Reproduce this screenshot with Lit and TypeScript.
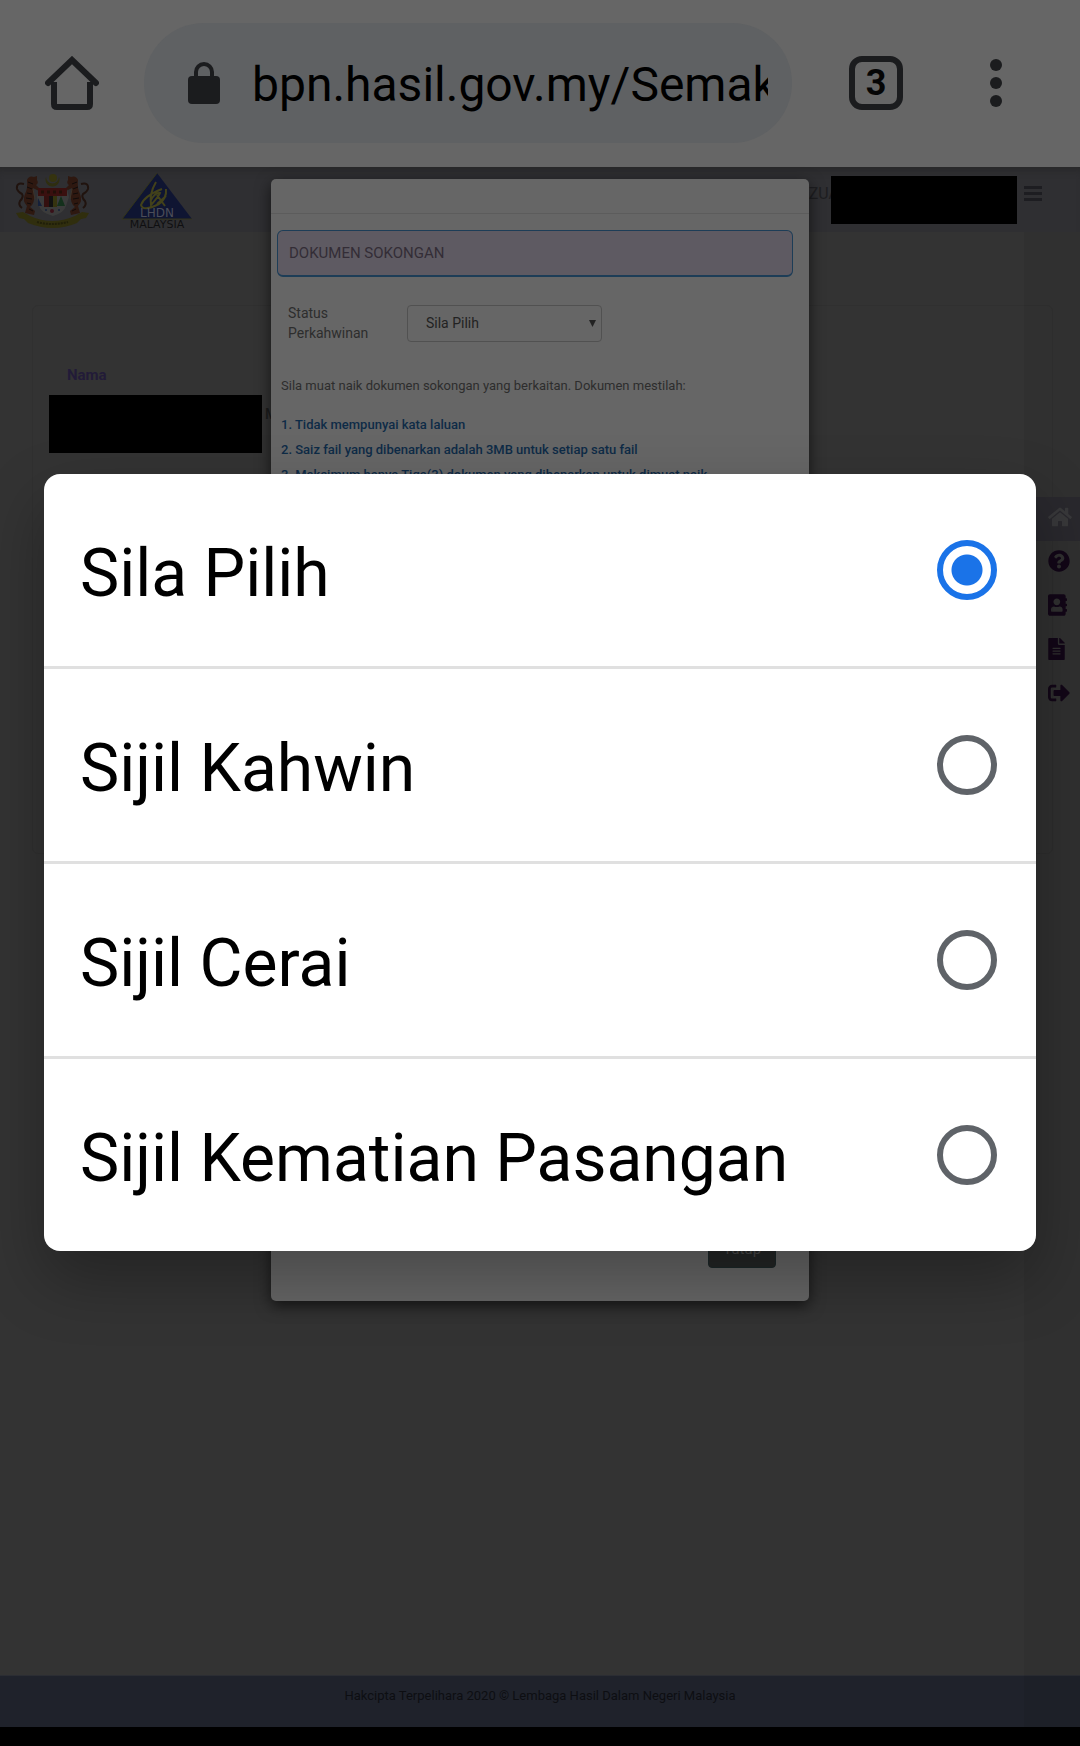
import { LitElement, html, css, svg } from "lit";
import { customElement, state } from "lit/decorators.js";

const SIDE_ICONS = [
  {
    name: "Utama",
    box: "0 0 576 512",
    width: 24,
    path: "M280.37 148.26L96 300.11V464a16 16 0 0 0 16 16l112.06-.29a16 16 0 0 0 15.92-16V368a16 16 0 0 1 16-16h64a16 16 0 0 1 16 16v95.64a16 16 0 0 0 16 16.05L464 480a16 16 0 0 0 16-16V300L295.67 148.26a12.19 12.19 0 0 0-15.3 0zM571.6 251.47L488 182.56V44.05a12 12 0 0 0-12-12h-56a12 12 0 0 0-12 12v72.61L318.47 43a48 48 0 0 0-61 0L4.34 251.47a12 12 0 0 0-1.6 16.9l25.5 31A12 12 0 0 0 45.15 301l235.22-193.74a12.19 12.19 0 0 1 15.3 0L530.9 301a12 12 0 0 0 16.9-1.6l25.5-31a12 12 0 0 0-1.7-16.93z",
  },
  {
    name: "Bantuan",
    box: "0 0 512 512",
    width: 22,
    path: "M504 256c0 136.997-111.043 248-248 248S8 392.997 8 256C8 119.083 119.043 8 256 8s248 111.083 248 248zM262.655 90c-54.497 0-89.255 22.957-116.549 63.758-3.536 5.286-2.353 12.415 2.715 16.258l34.699 26.31c5.205 3.947 12.621 3.008 16.665-2.122 17.864-22.658 30.113-35.797 57.303-35.797 20.429 0 45.698 13.148 45.698 32.958 0 14.976-12.363 22.667-32.534 33.976C247.128 238.528 216 254.941 216 296v4c0 6.627 5.373 12 12 12h56c6.627 0 12-5.373 12-12v-1.333c0-28.462 83.186-29.647 83.186-106.667 0-58.002-60.165-102-116.531-102zM256 338c-25.365 0-46 20.635-46 46 0 25.364 20.635 46 46 46s46-20.636 46-46c0-25.365-20.635-46-46-46z",
  },
  {
    name: "Hubungi",
    box: "0 0 448 512",
    width: 19,
    path: "M436 160c6.6 0 12-5.4 12-12v-40c0-6.6-5.4-12-12-12h-20V48c0-26.5-21.5-48-48-48H48C21.5 0 0 21.5 0 48v416c0 26.5 21.5 48 48 48h320c26.5 0 48-21.5 48-48v-48h20c6.6 0 12-5.4 12-12v-40c0-6.6-5.4-12-12-12h-20v-64h20c6.6 0 12-5.4 12-12v-40c0-6.6-5.4-12-12-12h-20v-64h20zm-228-60c46 0 80 35 80 80s-34 80-80 80-80-35-80-80 34-80 80-80zm136 292c0 13-10 24-24 24H96c-14 0-24-11-24-24v-32c0-38 30-66 68-66h5c17 8 38 12 63 12s46-4 63-12h5c38 0 68 28 68 66v32z",
  },
  {
    name: "Dokumen",
    box: "0 0 384 512",
    width: 17,
    path: "M224 136V0H24C10.7 0 0 10.7 0 24v464c0 13.3 10.7 24 24 24h336c13.3 0 24-10.7 24-24V160H248c-13.2 0-24-10.8-24-24zm64 236c0 6.6-5.4 12-12 12H108c-6.6 0-12-5.4-12-12v-8c0-6.6 5.4-12 12-12h168c6.6 0 12 5.4 12 12v8zm0-64c0 6.6-5.4 12-12 12H108c-6.6 0-12-5.4-12-12v-8c0-6.6 5.4-12 12-12h168c6.6 0 12 5.4 12 12v8zm0-72v8c0 6.6-5.4 12-12 12H108c-6.6 0-12-5.4-12-12v-8c0-6.6 5.4-12 12-12h168c6.6 0 12 5.4 12 12zm96-114.1v6.1H256V0h6.1c6.4 0 12.5 2.5 17 7l97.9 98c4.5 4.5 7 10.6 7 16.9z",
  },
  {
    name: "Keluar",
    box: "0 0 512 512",
    width: 22,
    path: "M497 273L329 441c-15 15-41 4.5-41-17v-96H152c-13.3 0-24-10.7-24-24v-96c0-13.3 10.7-24 24-24h136V88c0-21.4 25.9-32 41-17l168 168c9.3 9.4 9.3 24.6 0 34zM192 436v-40c0-6.6-5.4-12-12-12H96c-17.7 0-32-14.3-32-32V160c0-17.7 14.3-32 32-32h84c6.6 0 12-5.4 12-12V76c0-6.6-5.4-12-12-12H96c-53 0-96 43-96 96v192c0 53 43 96 96 96h84c6.6 0 12-5.4 12-12z",
  },
];

const STATUSES = ["Sila Pilih", "Sijil Kahwin", "Sijil Cerai", "Sijil Kematian Pasangan"];

// One supporting tiger of the coat of arms, drawn for the left side.
const tiger = svg`
  <path d="M9 12Q1 10 2 17Q3 20 7 22Q9 25 5 29Q3 33 7 36" fill="none" stroke="#20130e" stroke-width="2"/>
  <path d="M12 8Q14 3 19 5L22 4L22 8Q24 11 21 13L25 17L24 19L18 16L19 24Q20 31 15 35L20 39L19 43L10 41L12 34Q7 29 10 22Q13 16 12 8Z" fill="#2e1810"/>
  <path d="M13 10l5 2M12 15l5 2M12 21l5 1M11 26l6 1M12 31l4 1M14 37l4 2" stroke="#100b0a" stroke-width="1"/>
  <path d="M18 17l2 10" stroke="#3d3328" stroke-width="1"/>`;

@customElement("app-root")
export class AppRoot extends LitElement {
  @state() private chosen = 0;

  static styles = css`
    :host {
      display: flex;
      flex-direction: column;
      position: relative;
      min-height: 100vh;
      background: #333;
      font-family: Roboto, "Liberation Sans", sans-serif;
      font-size: 14px;
      line-height: 20px;
      overflow: hidden;
    }
    * {
      box-sizing: border-box;
    }
    button,
    input,
    select {
      font: inherit;
      color: inherit;
      margin: 0;
      padding: 0;
      border: 0;
      background: none;
      appearance: none;
      outline: none;
    }
    svg {
      display: block;
      flex: none;
    }

    .browser {
      display: flex;
      align-items: center;
      height: 167px;
      padding: 0 66px 2px 45px;
      background: #666;
      color: #1b1c1e;
    }
    .address {
      display: flex;
      align-items: center;
      flex: 1;
      min-width: 0;
      height: 120px;
      margin: 0 57px 0 45px;
      padding: 0 24px 0 44px;
      gap: 32px;
      border-radius: 60px;
      background: #5f6163;
    }
    .url {
      flex: 1;
      min-width: 0;
      height: 60px;
      padding-top: 4px;
      font-size: 48px;
      color: #000;
    }
    .tabs {
      width: 54px;
      height: 54px;
      border: 6px solid #1b1c1e;
      border-radius: 13px;
      font-size: 36px;
      line-height: 42px;
      font-weight: 700;
      color: #050505;
      text-align: center;
    }
    .more {
      margin-left: 75px;
      padding: 0 12px;
    }

    .page {
      display: flex;
      flex-direction: column;
      flex: 1;
      position: relative;
      border-bottom: 19px solid #000;
    }
    .site {
      display: flex;
      align-items: flex-start;
      height: 65px;
      padding: 5px 38px 0 15px;
      background: #2f2f32;
      box-shadow: inset 0 8px 8px -6px #262627;
    }
    .lhdn {
      margin-left: 30px;
    }
    .user {
      margin-left: auto;
      padding-top: 12px;
      font-size: 16px;
      color: #1e1e21;
    }
    .redacted {
      background: #000;
    }
    .user-box {
      width: 186px;
      height: 48px;
      margin: 4px 7px 0 -8px;
      z-index: 1;
    }
    .menu {
      margin-top: 14px;
    }
    .card {
      margin: 73px 27px auto 32px;
      padding: 59px 16px 400px;
      border: 1px solid #303030;
      border-radius: 6px;
    }
    .name {
      margin: 0 0 10px 18px;
      font-size: 15px;
      font-weight: 700;
      color: #221b38;
    }
    .record {
      display: flex;
      gap: 3px;
      color: #1c1c1c;
      font-weight: 500;
    }
    .record .redacted {
      width: 213px;
      height: 58px;
    }
    .record span {
      padding-top: 9px;
    }
    .foot {
      height: 52px;
      padding-top: 10px;
      border-top: 1px solid #2b2d33;
      background: #1f222b;
      font-size: 13px;
      text-align: center;
      color: #0d0e12;
    }
    .rail {
      position: absolute;
      top: 65px;
      right: 0;
      bottom: 0;
      width: 56px;
      padding-top: 265px;
      background: rgba(0, 0, 0, 0.05);
    }
    .rail a {
      display: flex;
      align-items: center;
      height: 44px;
      padding: 0 0 4px 24px;
      color: #120617;
    }
    .rail a:first-child {
      background: #29282d;
      color: #38383a;
    }

    .modal {
      display: flex;
      flex-direction: column;
      position: absolute;
      top: 12px;
      bottom: 426px;
      left: 0;
      right: 0;
      width: 538px;
      margin: 0 auto;
      padding-bottom: 33px;
      border-radius: 5px;
      background: #666;
      box-shadow: 0 5px 15px rgba(0, 0, 0, 0.6);
      color: #2d2d2d;
    }
    .modal-head {
      height: 35px;
      border-bottom: 1px solid #5c5c5c;
    }
    .panel-title {
      margin: 16px 16px 0 6px;
      padding: 12px 11px;
      height: 47px;
      border: 1px solid #1d3d57;
      border-bottom-width: 2px;
      border-radius: 6px;
      background: #5e5a62;
      font-size: 15px;
      font-weight: 400;
      color: #332d36;
    }
    .field {
      display: flex;
      align-items: center;
      gap: 20px;
      margin: 26px 17px 0;
    }
    .field label {
      width: 99px;
    }
    .pick {
      position: relative;
    }
    .pick select {
      display: block;
      width: 195px;
      height: 37px;
      padding: 0 18px;
      border: 1px solid #515151;
      border-radius: 4px;
      color: #222;
      font-size: 14px;
    }
    .pick svg {
      position: absolute;
      right: 6px;
      top: 15px;
    }
    .intro {
      margin: 33px 10px 0;
      font-size: 13px;
    }
    .rules {
      margin: 16px 10px 0;
      padding: 0;
      list-style: none;
      font-size: 13px;
      line-height: 25px;
      font-weight: 500;
      color: #0e2b46;
    }
    .close {
      width: 68px;
      height: 38px;
      margin: auto 33px 0 auto;
      border: 1px solid #1c2829;
      border-radius: 4px;
      background: #242626;
      color: #4a4a4a;
      font-size: 15px;
    }

    .picker {
      position: absolute;
      inset: 0 0 21px;
      display: flex;
      align-items: center;
      padding: 0 44px;
    }
    .options {
      flex: 1;
      margin: 0;
      padding: 0;
      border: 0;
      border-radius: 16px;
      background: #fff;
      box-shadow: 0 28px 64px rgba(0, 0, 0, 0.3);
    }
    .option {
      display: flex;
      align-items: center;
      justify-content: space-between;
      height: 192px;
      padding: 0 39px 0 36px;
      font-size: 66px;
      line-height: 80px;
      color: #000;
    }
    .option + .option {
      height: 195px;
      border-top: 3px solid #e0e0e0;
    }
    .option span {
      padding-top: 8px;
    }
    .option input {
      flex: none;
      width: 60px;
      height: 60px;
      border: 6px solid #5f6368;
      border-radius: 50%;
    }
    .option input:checked {
      border-color: #1a73e8;
      background: radial-gradient(circle, #1a73e8 15px, transparent 16px);
    }
  `;

  render() {
    return html`
      <header class="browser">
        <button aria-label="Home">
          <svg width="54" height="54" viewBox="0 0 54 54" fill="none" stroke="currentColor" stroke-width="6">
            <path d="M9 26V48q0 3 3 3H42q3 0 3-3V26" />
            <path d="M3 27L27 4 51 27" stroke-linecap="round" />
          </svg>
        </button>
        <div class="address">
          <svg width="32" height="42" viewBox="0 0 32 42">
            <rect y="14" width="32" height="28" rx="4" fill="currentColor" />
            <path d="M8 16V10a8 8 0 0 1 16 0v6" fill="none" stroke="currentColor" stroke-width="4" />
          </svg>
          <input class="url" aria-label="Address" readonly .value=${"bpn.hasil.gov.my/SemakanStatus"} />
        </div>
        <button class="tabs" aria-label="Tabs">3</button>
        <button class="more" aria-label="More">
          <svg width="12" height="48" viewBox="0 0 12 48" fill="currentColor">
            <circle cx="6" cy="6" r="6" /><circle cx="6" cy="24" r="6" /><circle cx="6" cy="42" r="6" />
          </svg>
        </button>
      </header>

      <div class="page">
        <div class="site">
          <svg width="75" height="57" viewBox="0 0 75 57">
            <g>${tiger}</g>
            <g transform="translate(75 0) scale(-1 1)">${tiger}</g>
            <path d="M31 5a7 7 0 1 0 13 0 6 6 0 0 1-13 0z" fill="#2f2e10" />
            <circle cx="38" cy="6" r="4" fill="#35330f" />
            <path d="M22 25L24 17H52L54 25 51 34Q49 41 38 44Q26 41 24 34Z" fill="#3b3b3b" />
            <path d="M23 16H52V24H23Z" fill="#3a100f" />
            <path d="M26 20h3m3 0h3m3 0h3m3 0h3" stroke="#211009" stroke-width="3" />
            <path d="M29 24h5v11h-5z" fill="#34100f" />
            <path d="M34 24h4v11h-4z" fill="#111" />
            <path d="M38 24h4v11h-4z" fill="#35330f" />
            <path d="M42 34l4-10 4 10z" fill="#14301c" />
            <path d="M23 26l4 8h-4z" fill="#15203a" />
            <circle cx="37" cy="39" r="2" fill="#381018" />
            <circle cx="31" cy="38" r="1" fill="#15203a" />
            <circle cx="44" cy="38" r="1" fill="#15203a" />
            <path d="M1 41l7-1 7 4q22 10 45 0l7-4 7 1-3 5-5 1-4 4q-24 10-49 0l-4-4-5-1z" fill="#302e0e" />
            <path d="M22 50q15 4 31 0" fill="none" stroke="#201f0a" stroke-width="2" stroke-dasharray="2 1" />
          </svg>
          <svg class="lhdn" width="76" height="57" viewBox="0 0 76 57">
            <path d="M37 1L72 47H2Z" fill="#0f1532" />
            <path d="M37 1L2 47H72" fill="none" stroke="#34351a" stroke-width="1" />
            <path d="M36 10q-7 12-5 23 8-9 9-12-5-1-9 7M42 17q-18 7-21 16 2 7 18-1 8-6 7-15M37 23l8 11M46 24l-9 8" fill="none" stroke="#42411a" stroke-width="2" />
            <text x="37" y="45" text-anchor="middle" font-family="DejaVu Sans, sans-serif" font-size="12" fill="#4b4d58">LHDN</text>
            <text x="37" y="56" text-anchor="middle" font-family="DejaVu Sans, sans-serif" font-size="11" fill="#0f0f11">MALAYSIA</text>
          </svg>
          <span class="user">ZUA</span>
          <div class="redacted user-box"></div>
          <button class="menu" aria-label="Menu">
            <svg width="18" height="16" viewBox="0 0 18 16" fill="#1d1d21">
              <path d="M0 0h18v3H0zM0 6h18v3H0zM0 12h18v3H0z" />
            </svg>
          </button>
        </div>
        <main class="card">
          <div class="name">Nama</div>
          <div class="record">
            <div class="redacted"></div>
            <span>M</span>
          </div>
        </main>
        <footer class="foot">Hakcipta Terpelihara 2020 © Lembaga Hasil Dalam Negeri Malaysia</footer>
        <nav class="rail">
          ${SIDE_ICONS.map(
            (i) => html`<a href="#" aria-label=${i.name}>
              <svg width=${i.width} height="22" viewBox=${i.box} fill="currentColor"><path d=${i.path} /></svg>
            </a>`
          )}
        </nav>
        <section class="modal">
          <div class="modal-head"></div>
          <div class="panel-title">DOKUMEN SOKONGAN</div>
          <div class="field">
            <label for="status">Status Perkahwinan</label>
            <div class="pick">
              <select id="status">
                ${STATUSES.map((s, i) => html`<option ?selected=${i === this.chosen}>${s}</option>`)}
              </select>
              <svg width="7" height="7" viewBox="0 0 7 7"><path d="M0 0H7L3.5 7Z" fill="#222" /></svg>
            </div>
          </div>
          <p class="intro">Sila muat naik dokumen sokongan yang berkaitan. Dokumen mestilah:</p>
          <ul class="rules">
            <li>1. Tidak mempunyai kata laluan</li>
            <li>2. Saiz fail yang dibenarkan adalah 3MB untuk setiap satu fail</li>
            <li>3. Maksimum hanya Tiga(3) dokumen yang dibenarkan untuk dimuat naik</li>
          </ul>
          <button class="close">Tutup</button>
        </section>
      </div>

      <div class="picker">
        <fieldset class="options" aria-label="Status Perkahwinan">
          ${STATUSES.map(
            (s, i) => html`<label class="option">
              <span>${s}</span>
              <input type="radio" name="option" .checked=${i === this.chosen} @change=${() => (this.chosen = i)} />
            </label>`
          )}
        </fieldset>
      </div>
    `;
  }
}
